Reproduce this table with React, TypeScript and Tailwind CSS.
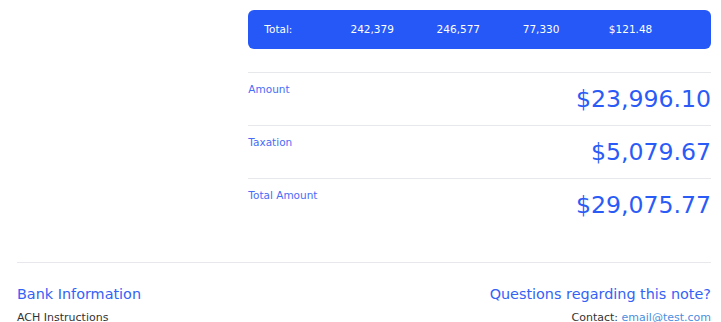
const totals = ['Total:', '242,379', '246,577', '77,330', '$121.48'];

const summary = [
  { label: 'Amount', value: '$23,996.10' },
  { label: 'Taxation', value: '$5,079.67' },
  { label: 'Total Amount', value: '$29,075.77' },
];

export default function App() {
  return (
    <div className="min-h-screen bg-white pl-[17px] pr-[10px] pt-[10px] font-['DejaVu_Sans',sans-serif]">
      <div className="ml-auto w-2/3">
        {/* Totals bar */}
        <div className="grid grid-cols-5 rounded-md bg-[#2558f6] px-4 py-3 text-[10.5px] leading-[15px] text-white">
          {totals.map((t) => (
            <div key={t}>{t}</div>
          ))}
        </div>

        {/* Summary rows */}
        <div className="mt-[23px]">
          {summary.map((row) => (
            <div key={row.label} className="flex items-start justify-between border-t border-[#e7e8ec] pt-[9px] pb-[10px]">
              <span className="text-[10.5px] leading-[15px] text-[#4a6cf6]">{row.label}</span>
              <span className="mt-[1px] text-[23.6px] leading-8 text-[#2b5bf6]">{row.value}</span>
            </div>
          ))}
        </div>
      </div>

      {/* Footer */}
      <div className="mt-[31px] flex justify-between border-t border-[#e7e8ec] pt-[21px]">
        <div>
          <h3 className="text-[14.4px] leading-5 text-[#3462f6]">Bank Information</h3>
          <p className="mt-[6px] text-[11px] leading-4 text-[#333]">ACH Instructions</p>
        </div>
        <div className="text-right">
          <h3 className="text-[14.4px] leading-5 text-[#3462f6]">Questions regarding this note?</h3>
          <p className="mt-[6px] text-[11px] leading-4 text-[#333]">
            Contact: <span className="text-[#4a8fde]">email@test.com</span>
          </p>
        </div>
      </div>
    </div>
  );
}
